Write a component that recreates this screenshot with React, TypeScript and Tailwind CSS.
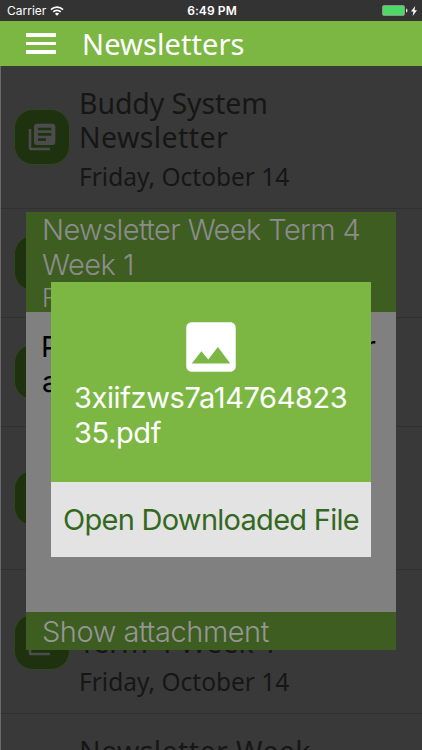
import React from "react";

function LibraryIcon() {
  return (
    <svg viewBox="0 0 24 24" className="h-8 w-8" fill="#4c4c4c">
      <path d="M4 6H2v14c0 1.100.9 2 2 2h14v-2H4V6zm16-4H8c-1.100 0-2 .9-2 2v12c0 1.100.9 2 2 2h12c1.100 0 2-.9 2-2V4c0-1.100-.9-2-2-2zm-1 9H9V9h10v2zm-4 4H9v-2h6v2zm4-8H9V5h10v2z" />
    </svg>
  );
}

function Row({ lines, height }: { lines: { text: string; tracking: string }[]; height: string }) {
  return (
    <div className={`flex shrink-0 items-center border-b border-[#303030] pl-[14px] ${height}`}>
      <div className="flex h-[56px] w-[56px] shrink-0 items-center justify-center rounded-[19px] border border-[#2f471f] bg-[#1f3210]">
        <LibraryIcon />
      </div>
      <div className="pt-[8px] pl-[9px] font-['Noto_Sans',sans-serif] whitespace-nowrap text-[#161616]">
        {lines.map((l) => (
          <div key={l.text} className={`text-[28.5px] leading-[34px] ${l.tracking}`}>{l.text}</div>
        ))}
        <div className="h-[42px] text-[24.5px] leading-[45px]">Friday, October 14</div>
      </div>
    </div>
  );
}

const narrow = "tracking-[-0.1px]";
const wide = "tracking-[0.4px]";
const snug = "tracking-[0.2px]";

export default function App() {
  return (
    <div className="relative flex h-[750px] w-[422px] flex-col overflow-hidden bg-[#393939] font-['Inter',sans-serif]">
      <div className="grid h-[21px] shrink-0 grid-cols-3 items-center bg-[#333333] pr-[5px] pl-[7px] text-[12px] text-white">
        <div className="flex items-center gap-[4px]">
          <span>Carrier</span>
          <svg viewBox="0 0 14 10" className="h-[10px] w-[14px]" fill="none" stroke="white" strokeWidth="1.700">
            <path d="M1 3.600a8.500 8.500 0 0 1 12 0M3.300 5.900a5.200 5.200 0 0 1 7.400 0" />
            <path d="M7 9.800L4.900 7.700a3 3 0 0 1 4.200 0z" fill="white" stroke="none" />
          </svg>
        </div>
        <div className="text-center font-semibold tracking-[0.1px]">6:49 PM</div>
        <div className="flex items-center justify-end gap-[3px]">
          <svg viewBox="0 0 26 11" className="h-[11px] w-[26px]">
            <rect x=".5" y=".5" width="22" height="10" rx="1.500" fill="#4cd964" stroke="#8b918b" />
            <path d="M24 3.500c2 .6 2 3.400 0 4z" fill="#ddd" />
          </svg>
          <svg viewBox="0 0 6 10" className="h-[10px] w-[6px]" fill="white">
            <path d="M4.200 0L0 5.600h2.500L1.600 10 6 4.200H3.500z" />
          </svg>
        </div>
      </div>
      <div className="flex h-[45px] shrink-0 items-center bg-[#7bb742] pl-[26px]">
        <div className="flex flex-col gap-[5px]">
          <div className="h-[3.5px] w-[30px] bg-white" />
          <div className="h-[3.5px] w-[30px] bg-white" />
          <div className="h-[3.5px] w-[30px] bg-white" />
        </div>
        <div className="pl-[26px] font-['Noto_Sans',sans-serif] text-[29px] leading-[45px] tracking-[0.1px] text-white">Newsletters</div>
      </div>
      <div className="flex flex-col">
        <Row height="h-[143px]" lines={[{ text: "Buddy System", tracking: narrow }, { text: "Newsletter", tracking: wide }]} />
        <Row height="h-[109px]" lines={[{ text: "Newsletter", tracking: wide }]} />
        <Row height="h-[109px]" lines={[{ text: "Newsletter", tracking: wide }]} />
        <Row height="h-[143px]" lines={[{ text: "Newsletter Week", tracking: wide }, { text: "Term 3 Week 9", tracking: snug }]} />
        <Row height="h-[144px]" lines={[{ text: "Newsletter Week", tracking: wide }, { text: "Term 4 Week 1", tracking: snug }]} />
        <Row height="h-[143px]" lines={[{ text: "Newsletter Week", tracking: wide }, { text: "Term 3 Week 8", tracking: snug }]} />
      </div>

      <div className="absolute top-[212px] left-[26px] flex h-[438px] w-[370px] flex-col text-[29px] whitespace-nowrap">
        <div className="h-[100px] overflow-hidden bg-[#3e5d21] pl-[16px] leading-[35px] font-[350] text-[#8c8c8c]">
          <div className="tracking-[-0.6px]">Newsletter Week Term 4</div>
          <div className="tracking-[-0.55px]">Week 1</div>
          <div className="text-[25px] leading-[32px]">Friday</div>
        </div>
        <div className="flex-1 bg-[#808080] pt-[17px] pl-[15px] leading-[35px] text-black">
          <div className="w-[335px] [text-align-last:justify]">Please find newsletter</div>
          <div className="pl-px">attached</div>
        </div>
        <div className="h-[38px] bg-[#3e5d21] pl-[16px] leading-[39px] font-[350] tracking-[-0.45px] text-[#969696]">Show attachment</div>
      </div>

      <div className="absolute top-[282px] left-[51px] flex h-[275px] w-[320px] flex-col text-[29px] whitespace-nowrap">
        <div className="flex h-[200px] flex-col bg-[#7bb742] pt-[32px] text-white">
          <svg viewBox="0 0 24 24" className="h-[66px] w-[66px] self-center" fill="white">
            <path d="M21 19V5c0-1.100-.9-2-2-2H5c-1.100 0-2 .9-2 2v14c0 1.100.9 2 2 2h14c1.100 0 2-.9 2-2zM8.500 13.500l2.500 3.010L14.500 12l4.500 6H5l3.500-4.500z" />
          </svg>
          <div className="pl-[23px] leading-[35px]">
            <div className="tracking-[-0.4px]">3xiifzws7a14764823</div>
            <div className="tracking-[-0.4px]">35.pdf</div>
          </div>
        </div>
        <div className="h-[75px] bg-[#e3e3e3] text-center leading-[76px] tracking-[-0.72px] text-[#33691e]">Open Downloaded File</div>
      </div>
      <div className="pointer-events-none absolute top-[66px] bottom-0 left-0 w-px bg-[#6a6a6a]" />
    </div>
  );
}
